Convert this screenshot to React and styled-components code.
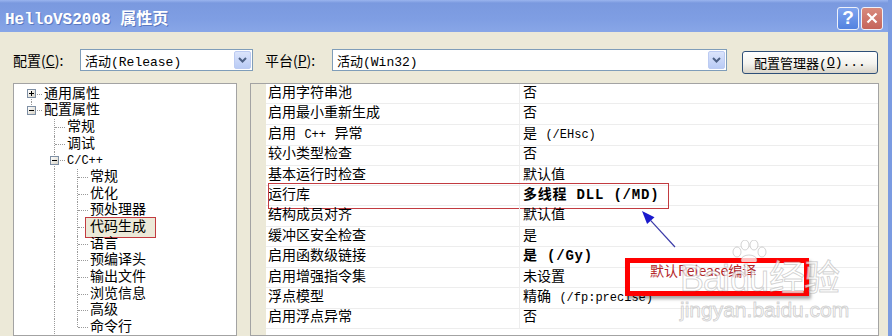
import styled, { createGlobalStyle } from "styled-components";

const GlobalStyle = createGlobalStyle`
  html, body {
    margin: 0;
    padding: 0;
    background: #ece9d8;
  }
  body {
    font-family: "Liberation Mono", "Noto Sans CJK SC", monospace;
    color: #000;
  }
  * {
    box-sizing: border-box;
  }
`;

const Window = styled.div`
  position: relative;
  width: 892px;
  height: 336px;
  overflow: hidden;
  background: #ece9d8;
  border-right: 4px solid #7b9be1;
  display: flex;
  flex-direction: column;
`;

const TitleBar = styled.div`
  height: 32px;
  flex: none;
  display: flex;
  align-items: center;
  justify-content: space-between;
  padding: 0 5px;
  background: linear-gradient(#9ab4ee 0px, #7a99df 3px, #7f9ee3 60%, #88a6e7 100%);
`;

const Title = styled.div`
  font: bold 16px "Liberation Mono", "Noto Sans CJK SC", monospace;
  color: #fff;
  text-shadow: 1px 1px 0 #5a78c0;
  margin-top: 2px;
`;

const Caption = styled.div`
  display: flex;
  gap: 2px;
  margin-top: 4px;
`;

const CapButton = styled.div`
  width: 22px;
  height: 23px;
  border: 1px solid #eef1fa;
  border-radius: 3px;
  background: ${({ $close }) =>
    $close
      ? "linear-gradient(#d88a7d, #c5645a)"
      : "linear-gradient(#7fa4ef, #5282e0)"};
  color: #fff;
  display: flex;
  align-items: center;
  justify-content: center;
  font: bold 19px "Liberation Sans", sans-serif;
`;

const Body = styled.div`
  flex: 1;
  min-height: 0;
  display: flex;
  flex-direction: column;
  padding: 16px 9px 0 13px;
`;

const ToolRow = styled.div`
  display: flex;
  align-items: center;
  height: 24px;
  flex: none;
`;

const FieldLabel = styled.span`
  width: ${({ $w }) => $w}px;
  margin-left: ${({ $gap }) => $gap || 0}px;
  font: 14px "Noto Sans CJK SC", "Liberation Sans", sans-serif;
  white-space: nowrap;
  flex: none;
`;

const Combo = styled.div`
  width: ${({ $w }) => $w}px;
  height: 22px;
  flex: none;
  border: 1px solid #7f9db9;
  background: #fff;
  display: flex;
  align-items: center;
  padding-left: 4px;
  font-size: 13px;
`;

const ComboText = styled.span`
  flex: 1;
  white-space: nowrap;
`;

const DropButton = styled.div`
  width: 17px;
  height: 18px;
  margin-right: 1px;
  border-radius: 2px;
  border: 1px solid #bccbf2;
  background: linear-gradient(#dbe4fb, #b9cbf5);
  display: flex;
  align-items: center;
  justify-content: center;
`;

const PushButton = styled.div`
  width: 136px;
  height: 23px;
  margin: 5px 0 0 15px;
  flex: none;
  border: 1px solid #2e4f78;
  border-radius: 3px;
  background: linear-gradient(#ffffff, #f4f3ee 55%, #d8d4c9);
  font-size: 13px;
  display: flex;
  align-items: center;
  justify-content: center;
  white-space: nowrap;
`;

const Main = styled.div`
  flex: 1;
  min-height: 0;
  display: flex;
  gap: 13px;
  margin-top: 11px;
`;

const Latin = styled.span`
  font-family: "Liberation Mono", monospace;
  font-size: 12px;
`;

const TreePanel = styled.div`
  width: 224px;
  flex: none;
  border: 1px solid #a3a3a3;
  background: #fff;
  padding: 1.5px 0 0 6px;
`;

const TreeRow = styled.div`
  display: flex;
  height: 16.7px;
`;

const Guide = styled.div`
  position: relative;
  width: 23px;
  flex: none;
  display: flex;
  align-items: center;
  justify-content: center;

  &::before {
    content: "";
    display: ${({ $up, $down }) => ($up || $down ? "block" : "none")};
    position: absolute;
    left: 11px;
    top: ${({ $up }) => ($up ? "0" : "50%")};
    bottom: ${({ $down }) => ($down ? "0" : "50%")};
    border-left: 1px dotted #9a9a9a;
  }

  &::after {
    content: "";
    display: ${({ $h }) => ($h ? "block" : "none")};
    position: absolute;
    left: 12px;
    right: 1px;
    top: 8px;
    border-top: 1px dotted #9a9a9a;
  }
`;

const Expander = styled.div`
  position: relative;
  z-index: 1;
  width: 9px;
  height: 9px;
  border: 1px solid #7e8fa4;
  background: linear-gradient(135deg, #ffffff, #d6d2c6);

  &::before {
    content: "";
    position: absolute;
    left: 1px;
    top: 3px;
    width: 5px;
    height: 1px;
    background: #000;
  }

  &::after {
    content: "";
    display: ${({ $open }) => ($open ? "none" : "block")};
    position: absolute;
    left: 3px;
    top: 1px;
    width: 1px;
    height: 5px;
    background: #000;
  }
`;

const TreeLabel = styled.span`
  position: relative;
  z-index: 0;
  padding-left: 1px;
  font: 14px "Liberation Mono", "Noto Sans CJK SC", monospace;
  line-height: 16.7px;
  white-space: nowrap;

  &::before {
    content: "";
    display: ${({ $selected }) => ($selected ? "block" : "none")};
    position: absolute;
    left: -4px;
    right: -10px;
    top: -2px;
    bottom: -2px;
    background: #ece9d8;
    border: 1.5px solid #c23b40;
    z-index: -1;
  }
`;

const GridPanel = styled.div`
  flex: 1;
  border: 1px solid #a3a3a3;
  padding-left: 15px;
  background: linear-gradient(90deg, #ece9d8 15px, #ffffff 15px);
`;

const PropRow = styled.div`
  position: relative;
  display: grid;
  grid-template-columns: 253px 1fr;
  height: 20.4px;

  &::after {
    content: "";
    display: ${({ $marked }) => ($marked ? "block" : "none")};
    position: absolute;
    left: 2px;
    width: 399px;
    top: -3px;
    bottom: -3px;
    border: 1.5px solid #c23b40;
  }
`;

const NameCell = styled.div`
  padding-left: 2px;
  border-bottom: 1px solid #ededed;
  font-size: 14px;
  line-height: 19.4px;
  white-space: nowrap;
`;

const ValueCell = styled.div`
  padding-left: 3px;
  border-left: 1px solid #ededed;
  border-bottom: 1px solid #ededed;
  font-size: 14px;
  line-height: 19.4px;
  font-weight: ${({ $bold }) => ($bold ? "bold" : "normal")};
  letter-spacing: ${({ $bold }) => ($bold ? "0.8px" : "0")};
  white-space: nowrap;

  & ${Latin} {
    font-size: ${({ $bold }) => ($bold ? "14px" : "12px")};
  }
`;

const ArrowMark = styled.svg`
  position: absolute;
  left: 636px;
  top: 205px;
`;

const Callout = styled.div`
  position: absolute;
  left: 625px;
  top: 258px;
  width: 184px;
  height: 38px;
  border: 5px solid #ff0000;
  box-shadow: 2px 3px 3px rgba(0, 0, 0, 0.35);
  padding-left: 20px;
  font: 14px "Noto Sans CJK SC", "Liberation Serif", serif;
  line-height: 14px;
  color: #b3272b;
`;

const Watermark = styled.div`
  position: absolute;
  left: 680px;
  top: 240px;
  display: flex;
  flex-direction: column;
  color: rgba(255, 255, 255, 0.72);
  -webkit-text-stroke: 1px rgba(130, 130, 130, 0.35);
  pointer-events: none;
`;

const MarkLine = styled.div`
  display: flex;
  align-items: flex-end;
  font: 36px "Liberation Sans", "Noto Sans CJK SC", sans-serif;
  line-height: 34px;
  letter-spacing: -1px;
`;

const PawWord = styled.div`
  display: flex;
  flex-direction: column;
  align-items: center;
`;

const MarkUrl = styled.div`
  font: 21px "Liberation Sans", sans-serif;
  line-height: 24px;
  margin-top: 2px;
`;

// ASCII runs are set in a narrower mono face, as the dialog's SimSun did
const mixed = (text) =>
  text
    .split(/([\x21-\x7e][\x20-\x7e]*[\x21-\x7e]|[\x21-\x7e])/)
    .map((part, i) => (i % 2 ? <Latin key={i}>{part}</Latin> : part));

const tree = [
  { label: "通用属性", guides: [{ box: "plus", down: true, h: true }] },
  { label: "配置属性", guides: [{ box: "minus", up: true, h: true }] },
  { label: "常规", guides: [{}, { up: true, down: true, h: true }] },
  { label: "调试", guides: [{}, { up: true, down: true, h: true }] },
  { label: "C/C++", guides: [{}, { box: "minus", up: true, down: true, h: true }] },
  { label: "常规", guides: [{}, { up: true, down: true }, { up: true, down: true, h: true }] },
  { label: "优化", guides: [{}, { up: true, down: true }, { up: true, down: true, h: true }] },
  { label: "预处理器", guides: [{}, { up: true, down: true }, { up: true, down: true, h: true }] },
  { label: "代码生成", selected: true, guides: [{}, { up: true, down: true }, { up: true, down: true, h: true }] },
  { label: "语言", guides: [{}, { up: true, down: true }, { up: true, down: true, h: true }] },
  { label: "预编译头", guides: [{}, { up: true, down: true }, { up: true, down: true, h: true }] },
  { label: "输出文件", guides: [{}, { up: true, down: true }, { up: true, down: true, h: true }] },
  { label: "浏览信息", guides: [{}, { up: true, down: true }, { up: true, down: true, h: true }] },
  { label: "高级", guides: [{}, { up: true, down: true }, { up: true, down: true, h: true }] },
  { label: "命令行", guides: [{}, { up: true, down: true }, { up: true, h: true }] },
];

const props = [
  ["启用字符串池", "否"],
  ["启用最小重新生成", "否"],
  ["启用 C++ 异常", "是 (/EHsc)"],
  ["较小类型检查", "否"],
  ["基本运行时检查", "默认值"],
  ["运行库", "多线程 DLL (/MD)", true, true],
  ["结构成员对齐", "默认值"],
  ["缓冲区安全检查", "是"],
  ["启用函数级链接", "是 (/Gy)", true],
  ["启用增强指令集", "未设置"],
  ["浮点模型", "精确 (/fp:precise)"],
  ["启用浮点异常", "否"],
];

const Chevron = () => (
  <svg width="9" height="6" viewBox="0 0 9 6">
    <path d="M1 1 L4.5 4.5 L8 1" fill="none" stroke="#4d6185" strokeWidth="2" />
  </svg>
);

const App = () => {
  return (
    <>
      <GlobalStyle />
      <Window>
        <TitleBar>
          <Title>HelloVS2008 属性页</Title>
          <Caption>
            <CapButton>?</CapButton>
            <CapButton $close>
              <svg width="12" height="12" viewBox="0 0 12 12">
                <path d="M1.5 1.5 L10.5 10.5 M10.5 1.5 L1.5 10.5" stroke="#fff" strokeWidth="2.2" />
              </svg>
            </CapButton>
          </Caption>
        </TitleBar>

        <Body>
          <ToolRow>
            <FieldLabel $w={67}>
              配置(<u>C</u>):
            </FieldLabel>
            <Combo $w={173}>
              <ComboText>活动(Release)</ComboText>
              <DropButton>
                <Chevron />
              </DropButton>
            </Combo>
            <FieldLabel $w={67} $gap={12}>
              平台(<u>P</u>):
            </FieldLabel>
            <Combo $w={395}>
              <ComboText>活动(Win32)</ComboText>
              <DropButton>
                <Chevron />
              </DropButton>
            </Combo>
            <PushButton>
              配置管理器(<u>O</u>)...
            </PushButton>
          </ToolRow>

          <Main>
            <TreePanel>
              {tree.map((item, i) => (
                <TreeRow key={i}>
                  {item.guides.map((g, j) => (
                    <Guide key={j} $up={g.up} $down={g.down} $h={g.h}>
                      {g.box && <Expander $open={g.box === "minus"} />}
                    </Guide>
                  ))}
                  <TreeLabel $selected={item.selected}>{mixed(item.label)}</TreeLabel>
                </TreeRow>
              ))}
            </TreePanel>

            <GridPanel>
              {props.map(([name, value, bold, marked], i) => (
                <PropRow key={i} $marked={marked}>
                  <NameCell>{mixed(name)}</NameCell>
                  <ValueCell $bold={bold}>{mixed(value)}</ValueCell>
                </PropRow>
              ))}
            </GridPanel>
          </Main>
        </Body>

        <ArrowMark width="45" height="48" viewBox="0 0 45 48">
          <line x1="14.8" y1="15.6" x2="39" y2="42" stroke="#3b3ba8" strokeWidth="1.2" />
          <polygon points="6,6 18.5,12.2 11.1,19" fill="#1a1acc" />
        </ArrowMark>

        <Callout>默认Release编译</Callout>

        <Watermark>
          <MarkLine>
            <span>Bai</span>
            <PawWord>
              <svg width="40" height="22" viewBox="0 0 40 22">
                <g fill="rgba(255,255,255,0.75)" stroke="rgba(130,130,130,0.35)">
                  <ellipse cx="8" cy="12" rx="4" ry="5" />
                  <ellipse cx="16" cy="5" rx="4" ry="5" />
                  <ellipse cx="25" cy="5" rx="4" ry="5" />
                  <ellipse cx="33" cy="12" rx="4" ry="5" />
                  <ellipse cx="20" cy="20" rx="8" ry="5" />
                </g>
              </svg>
              <span>du</span>
            </PawWord>
            <span>经验</span>
          </MarkLine>
          <MarkUrl>jingyan.baidu.com</MarkUrl>
        </Watermark>
      </Window>
    </>
  );
};

export default App;
